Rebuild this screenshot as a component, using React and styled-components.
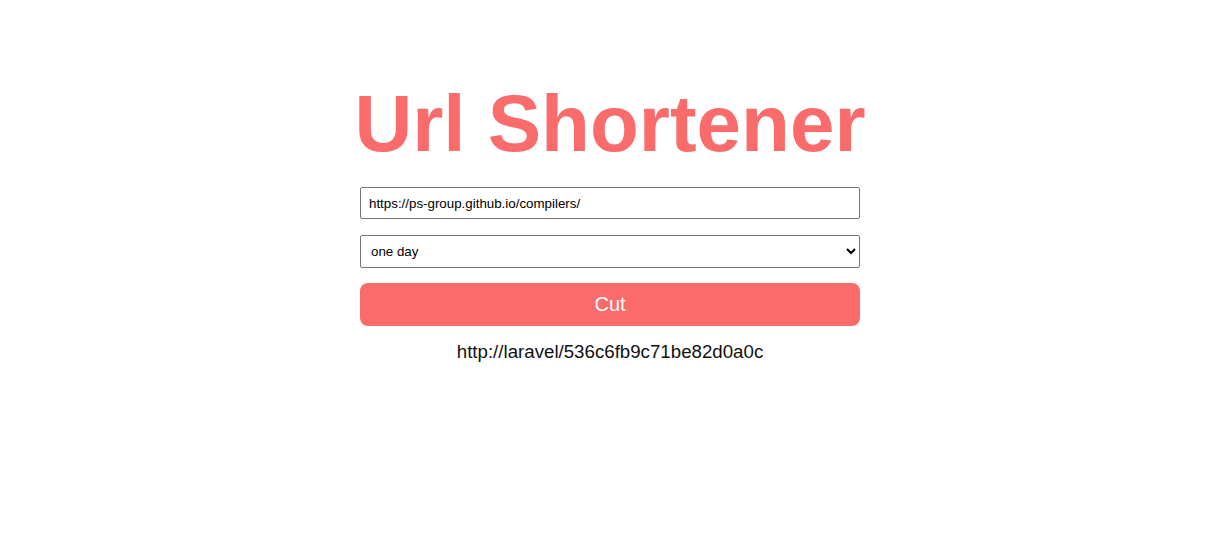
import React, { useState } from "react";
import styled, { createGlobalStyle } from "styled-components";

const GlobalStyle = createGlobalStyle`
  body {
    margin: 0;
    background: #ffffff;
    font-family: "Liberation Sans", Arial, sans-serif;
  }
`;

const Page = styled.div`
  display: flex;
  justify-content: center;
  padding: 78px 11px 0 0;
`;

const Form = styled.div`
  display: flex;
  flex-direction: column;
  align-items: center;
  width: 500px;
`;

const Title = styled.h1`
  margin: 0 0 17px;
  font-size: 80px;
  line-height: 92px;
  font-weight: 700;
  color: #fa6b6b;
  white-space: nowrap;
`;

const UrlInput = styled.input`
  box-sizing: border-box;
  width: 100%;
  height: 32px;
  padding: 0 8px;
  border: 1px solid #767676;
  border-radius: 2px;
  font-family: "Liberation Sans", Arial, sans-serif;
  font-size: 13.33px;
  color: #000;
  outline: none;
`;

const Period = styled.select`
  box-sizing: border-box;
  width: 100%;
  height: 33px;
  margin-top: 16px;
  padding: 0 6px;
  border: 1px solid #767676;
  border-radius: 2px;
  background: #fff;
  font-family: "Liberation Sans", Arial, sans-serif;
  font-size: 13.33px;
  color: #000;
`;

const CutButton = styled.button`
  width: 100%;
  height: 43px;
  margin-top: 15px;
  border: none;
  border-radius: 8px;
  background: #fa6b6b;
  color: #fff;
  font-family: "Liberation Sans", Arial, sans-serif;
  font-size: 20px;
  cursor: pointer;
`;

const Result = styled.p`
  margin: 15px 0 0;
  font-size: 18.7px;
  color: #111;
`;

export default function App() {
  const [url, setUrl] = useState("https://ps-group.github.io/compilers/");

  return (
    <>
      <GlobalStyle />
      <Page>
        <Form>
          <Title>Url Shortener</Title>
          <UrlInput value={url} onChange={(e) => setUrl(e.target.value)} />
          <Period defaultValue="day">
            <option value="day">one day</option>
            <option value="week">one week</option>
            <option value="month">one month</option>
          </Period>
          <CutButton>Cut</CutButton>
          <Result>http://laravel/536c6fb9c71be82d0a0c</Result>
        </Form>
      </Page>
    </>
  );
}
